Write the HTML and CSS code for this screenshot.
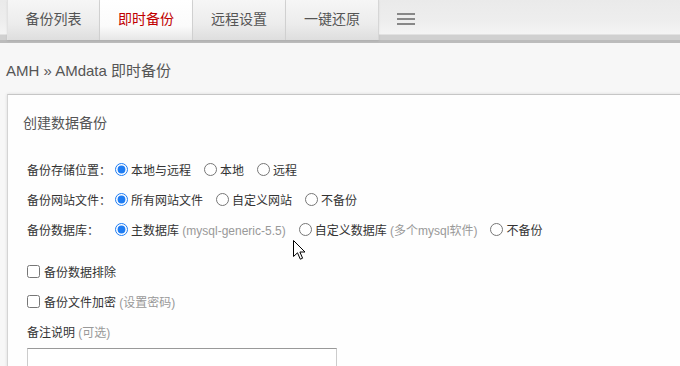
FILE: index.html
```html
<!DOCTYPE html>
<html lang="zh-CN">
<head>
    <meta charset="UTF-8">
    <meta name="viewport" content="width=device-width, initial-scale=1.0">
    <title>AMdata 即时备份</title>
    <link rel="stylesheet" href="styles.css">
</head>
<body>
    <nav class="topnav">
        <a class="tab" href="#">备份列表</a>
        <a class="tab active" href="#">即时备份</a>
        <a class="tab" href="#">远程设置</a>
        <a class="tab" href="#">一键还原</a>
        <span class="menu-btn"><i></i><i></i><i></i></span>
    </nav>

    <div class="crumb">AMH » AMdata 即时备份</div>

    <div class="card">
        <div class="card-title">创建数据备份</div>
        <form class="backup-form">
            <div class="row">
                <span class="row-label">备份存储位置：</span>
                <label class="opt"><input type="radio" name="store" checked><span>本地与远程</span></label>
                <label class="opt"><input type="radio" name="store"><span>本地</span></label>
                <label class="opt"><input type="radio" name="store"><span>远程</span></label>
            </div>
            <div class="row">
                <span class="row-label">备份网站文件：</span>
                <label class="opt"><input type="radio" name="site" checked><span>所有网站文件</span></label>
                <label class="opt"><input type="radio" name="site"><span>自定义网站</span></label>
                <label class="opt"><input type="radio" name="site"><span>不备份</span></label>
            </div>
            <div class="row">
                <span class="row-label">备份数据库：</span>
                <label class="opt"><input type="radio" name="db" checked><span>主数据库 <em>(mysql-generic-5.5)</em></span></label>
                <label class="opt"><input type="radio" name="db"><span>自定义数据库 <em>(多个mysql软件)</em></span></label>
                <label class="opt"><input type="radio" name="db"><span>不备份</span></label>
            </div>

            <div class="row check first">
                <label class="opt"><input type="checkbox"><span>备份数据排除</span></label>
            </div>
            <div class="row check">
                <label class="opt"><input type="checkbox"><span>备份文件加密 <em>(设置密码)</em></span></label>
            </div>

            <div class="note-label">备注说明 <em>(可选)</em></div>
            <input class="note-input" type="text">
        </form>
    </div>

    <svg class="cursor" width="13" height="20" viewBox="0 0 13 20">
        <path d="M0.5 0.5 L0.5 16.5 L4.5 12.8 L7.3 19.2 L9.6 18.2 L6.9 12 L12 12 Z" fill="#fff" stroke="#000" stroke-width="1" stroke-linejoin="miter"/>
    </svg>
</body>
</html>
```

FILE: styles.css
```css
:root {
    --page-bg: #f7f7f7; --text: #444; --muted: #999; --border: #d4d4d4;
    --active: #c00000;
}
* { box-sizing: border-box; }
html, body { height: 100%; }
body { margin: 0; background: var(--page-bg); color: var(--text); font-family: "Liberation Sans", "Noto Sans CJK SC", sans-serif; overflow: hidden; position: relative; }

.topnav { display: flex; align-items: flex-start; height: 43px; padding-left: 7px; background: linear-gradient(#eaeaea 0, #eeeeee 22px, #f4f4f4 34px, #d0d0d0 35px, #d0d0d0 40px, #bcbcbc 40px); }
.tab { width: 93px; height: 40px; display: flex; align-items: center; justify-content: center; padding-bottom: 5px; font-size: 14px; color: #555; text-decoration: none; background: linear-gradient(#f6f6f6, #ececec 60%, #dedede); border-left: 1px solid #e2e2e2; border-right: 1px solid #d6d6d6; box-shadow: 0 1px 2px rgba(0,0,0,0.08); }
.tab + .tab { border-left: 0; }
.tab.active { color: var(--active); background: linear-gradient(#ffffff, #fbfbfb 65%, #e6e6e6); }
.menu-btn { display: flex; flex-direction: column; gap: 3px; margin: 13px 0 0 18px; }
.menu-btn i { display: block; width: 18px; height: 2px; background: #888; }

.crumb { padding: 18px 6px 13px; font-size: 15px; line-height: 20px; color: #555; }

.card { margin-left: 7px; margin-right: -20px; height: 400px; background: #fefefe; border: 1px solid var(--border); border-top-color: #c6c6c6; box-shadow: 0 0 3px rgba(0,0,0,0.12); }
.card-title { padding: 18px 15px 0; font-size: 14px; line-height: 20px; color: #555; }

.backup-form { padding: 21px 19px 0; font-size: 12px; color: #333; accent-color: #1f7cf2; }
.row { display: flex; align-items: center; height: 30px; }
.row.check.first { margin-top: 12px; }
.row-label { width: 88px; flex: none; }
.opt { display: flex; align-items: center; margin-right: 13px; white-space: nowrap; }
.opt input { margin: 0 3px 0 0; width: 13px; height: 13px; }
.opt input[type="checkbox"] { margin-right: 4px; }
em { font-style: normal; color: var(--muted); }
.note-label { margin-top: 7px; line-height: 20px; }
.note-input { display: block; margin-top: 5px; width: 310px; height: 30px; border: 1px solid #ccc; border-top-color: #999; background: #fff; }

.cursor { position: absolute; left: 293px; top: 240px; }
```
